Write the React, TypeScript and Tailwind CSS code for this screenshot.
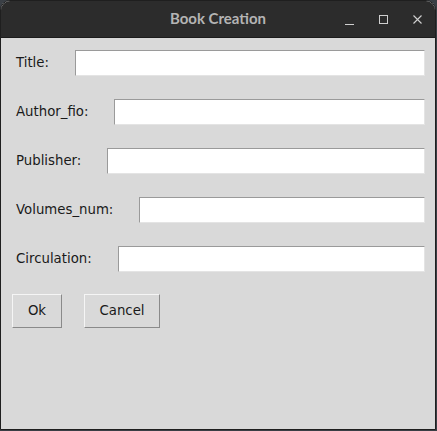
export default function App() {
  const fields = ["Title:", "Author_fio:", "Publisher:", "Volumes_num:", "Circulation:"]

  return (
    <div className="w-[437px] h-[431px] bg-[#3a3f45] overflow-hidden" style={{ fontFamily: "'DejaVu Sans', sans-serif" }}>
      <div className="w-[436px] h-[430px] flex flex-col rounded-t-[10px] overflow-hidden border border-[#1f1f1f] bg-[#d9d9d9]">
        {/* Title bar */}
        <div className="h-[37px] shrink-0 bg-[#2c2c2c] flex items-center border-b border-[#1c1c1c]">
          <div className="w-[100px]" />
          <div className="flex-1 text-center text-[15px] font-bold text-[#b4b4b4] font-['Lato',sans-serif] pb-[1px]">Book Creation</div>
          <div className="w-[100px] flex items-center justify-end gap-[25px] pr-[13px] text-[#cfcfcf]">
            <svg width="9" height="9" viewBox="0 0 9 9" className="mt-[4px]">
              <line x1="0" y1="7.5" x2="9" y2="7.5" stroke="currentColor" strokeWidth="1" />
            </svg>
            <svg width="9" height="9" viewBox="0 0 9 9">
              <rect x="0.5" y="0.5" width="8" height="8" fill="none" stroke="currentColor" strokeWidth="1" />
            </svg>
            <svg width="9" height="9" viewBox="0 0 9 9">
              <path d="M0.5 0.5 L8.5 8.5 M8.5 0.5 L0.5 8.5" stroke="currentColor" strokeWidth="1.1" />
            </svg>
          </div>
        </div>

        {/* Form */}
        <div className="flex flex-col gap-[23px] pt-[12px] pr-[10px]">
          {fields.map((f) => (
            <div key={f} className="flex items-center h-[26px]">
              <span className="pl-[15px] text-[13.3px] text-[#1a1a1a] whitespace-nowrap">{f}</span>
              <div className="ml-[26px] flex-1 h-[26px] bg-white border border-t-[#9a9a9a] border-l-[#9a9a9a] border-r-[#e4e4e4] border-b-[#e4e4e4]" />
            </div>
          ))}
        </div>

        {/* Buttons */}
        <div className="flex gap-[22px] pl-[11px] mt-[22px]">
          <button className="w-[50px] h-[34px] bg-[#d9d9d9] border border-t-[#f5f5f5] border-l-[#f5f5f5] border-r-[#8a8a8a] border-b-[#8a8a8a] text-[13.3px] text-[#1a1a1a]">
            Ok
          </button>
          <button className="w-[76px] h-[34px] bg-[#d9d9d9] border border-t-[#f5f5f5] border-l-[#f5f5f5] border-r-[#8a8a8a] border-b-[#8a8a8a] text-[13.3px] text-[#1a1a1a]">
            Cancel
          </button>
        </div>
      </div>
    </div>
  )
}
